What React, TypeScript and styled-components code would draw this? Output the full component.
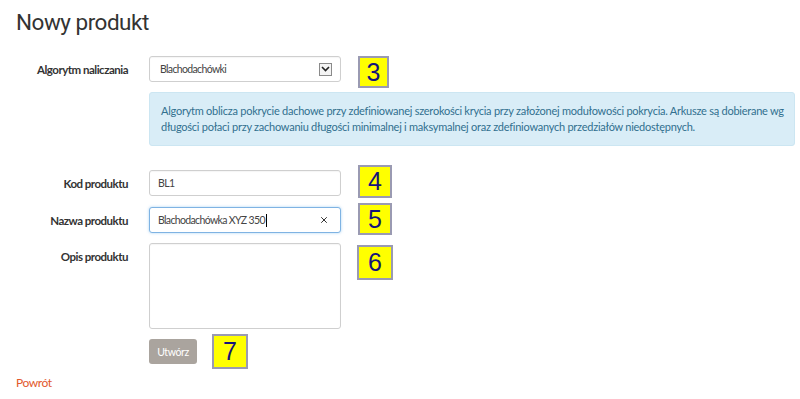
import React from 'react';
import styled, { createGlobalStyle } from 'styled-components';
import { X } from 'lucide-react';

const GlobalStyle = createGlobalStyle`
  html, body { margin: 0; padding: 0; background: #ffffff; }
  body { font-family: Lato, "Open Sans", sans-serif; color: #333333; }
  * { box-sizing: border-box; }
`;

const Page = styled.div`
  width: 800px;
  padding: 8px 16px 0 16px;
`;

const Title = styled.h1`
  margin: 0;
  font-family: Roboto, Lato, sans-serif;
  font-size: 22.5px;
  font-weight: 400;
  letter-spacing: -0.5px;
  line-height: 28px;
  color: #333333;
`;

const Form = styled.div`
  display: flex;
  flex-direction: column;
  margin-top: 20px;
`;

const Row = styled.div<{ $mt?: number }>`
  display: flex;
  align-items: flex-start;
  margin-top: ${(p) => p.$mt ?? 0}px;
`;

const Label = styled.label`
  flex: none;
  width: 112px;
  margin-right: 21px;
  padding-top: 7px;
  text-align: right;
  font-size: 11.5px;
  letter-spacing: -0.5px;
  line-height: 14px;
  font-weight: 700;
  color: #333333;
`;

const Spacer = styled.div`
  flex: none;
  width: 133px;
`;

const Control = styled.div`
  position: relative;
  width: 192px;
  flex: none;
`;

const Field = styled.div<{ $focus?: boolean; $h?: number }>`
  display: flex;
  align-items: center;
  height: ${(p) => p.$h ?? 26}px;
  padding: 0 9px 0 8px;
  border: 1px solid ${(p) => (p.$focus ? '#7fb3e3' : '#cfcfcf')};
  border-radius: 3px;
  background: #ffffff;
  box-shadow: ${(p) => (p.$focus ? '0 0 3px rgba(102,175,233,0.55)' : 'inset 0 1px 1px rgba(0,0,0,0.04)')};
  font-size: 10.5px;
  letter-spacing: -0.65px;
  color: #444444;
`;

const FieldText = styled.span<{ $indent?: number }>`
  flex: 1;
  white-space: nowrap;
  padding-left: ${(p) => p.$indent ?? 0}px;
`;

const Caret = styled.span`
  display: inline-block;
  width: 1px;
  height: 13px;
  margin-left: 1px;
  background: #000;
  vertical-align: -3px;
`;

const SelectButton = styled.span`
  display: flex;
  align-items: center;
  justify-content: center;
  width: 13px;
  height: 13px;
  border: 1px solid #8a8a8a;
  background: #f4f4f4;
  margin-right: -1px;
`;

const ClearIcon = styled.span`
  display: flex;
  align-items: center;
  color: #333;
  margin-right: 2px;
`;

const Badge = styled.div<{ $left: number; $top: number; $w: number; $h: number }>`
  position: absolute;
  left: calc(100% + ${(p) => p.$left}px);
  top: ${(p) => p.$top}px;
  width: ${(p) => p.$w}px;
  height: ${(p) => p.$h}px;
  background: #ffff00;
  border: 2px solid #9a9ab2;
  display: flex;
  align-items: center;
  justify-content: center;
  font-family: "Liberation Sans", Arial, sans-serif;
  font-size: 25px;
  letter-spacing: 0;
  line-height: 1;
  color: #14147a;
`;

const InfoBox = styled.div`
  flex: 1;
  margin-top: 10px;
  margin-right: -11px;
  padding: 10px 11px 10px 11px;
  background: #d9edf7;
  border: 1px solid #cce6f2;
  border-radius: 3px;
  color: #31708f;
  font-size: 11px;
  letter-spacing: -0.25px;
  line-height: 16px;
  white-space: nowrap;
  overflow: hidden;
`;

const ButtonWrap = styled.div`
  position: relative;
  flex: none;
`;

const Button = styled.button`
  display: block;
  width: 48px;
  height: 25px;
  padding: 0;
  border: none;
  border-radius: 3px;
  background: #aaa49e;
  color: #ffffff;
  font-family: Lato, "Open Sans", sans-serif;
  font-size: 10.5px;
  letter-spacing: -0.4px;
`;

const Back = styled.a`
  display: block;
  margin-top: 12px;
  font-size: 12px;
  letter-spacing: -0.4px;
  line-height: 14px;
  color: #e2582c;
  text-decoration: none;
`;

export default function App() {
  return (
    <>
      <GlobalStyle />
      <Page>
        <Title>Nowy produkt</Title>
        <Form>
          <Row>
            <Label>Algorytm naliczania</Label>
            <Control>
              <Field>
                <FieldText $indent={2}>Blachodachówki</FieldText>
                <SelectButton>
                  <svg width="9" height="6" viewBox="0 0 9 6">
                    <path d="M1 1 L4.5 4.5 L8 1" fill="none" stroke="#222" strokeWidth="1.6" />
                  </svg>
                </SelectButton>
              </Field>
              <Badge $left={17} $top={0} $w={31} $h={32}>3</Badge>
            </Control>
          </Row>
          <Row>
            <Spacer />
            <InfoBox>
              Algorytm oblicza pokrycie dachowe przy zdefiniowanej szerokości krycia przy założonej modułowości pokrycia. Arkusze są dobierane wg
              <br />
              długości połaci przy zachowaniu długości minimalnej i maksymalnej oraz zdefiniowanych przedziałów niedostępnych.
            </InfoBox>
          </Row>
          <Row $mt={24}>
            <Label>Kod produktu</Label>
            <Control>
              <Field>
                <FieldText>BL1</FieldText>
              </Field>
              <Badge $left={17} $top={-5} $w={34} $h={33}>4</Badge>
            </Control>
          </Row>
          <Row $mt={11}>
            <Label>Nazwa produktu</Label>
            <Control>
              <Field $focus>
                <FieldText>
                  Blachodachówka XYZ 350<Caret />
                </FieldText>
                <ClearIcon>
                  <X size={10} strokeWidth={2.4} />
                </ClearIcon>
              </Field>
              <Badge $left={17} $top={-4} $w={34} $h={32}>5</Badge>
            </Control>
          </Row>
          <Row $mt={10}>
            <Label>Opis produktu</Label>
            <Control>
              <Field $h={86} />
              <Badge $left={16} $top={2} $w={36} $h={35}>6</Badge>
            </Control>
          </Row>
          <Row $mt={10}>
            <Spacer />
            <ButtonWrap>
              <Button>Utwórz</Button>
              <Badge $left={15} $top={-5} $w={36} $h={35}>7</Badge>
            </ButtonWrap>
          </Row>
        </Form>
        <Back href="#">Powrót</Back>
      </Page>
    </>
  );
}
